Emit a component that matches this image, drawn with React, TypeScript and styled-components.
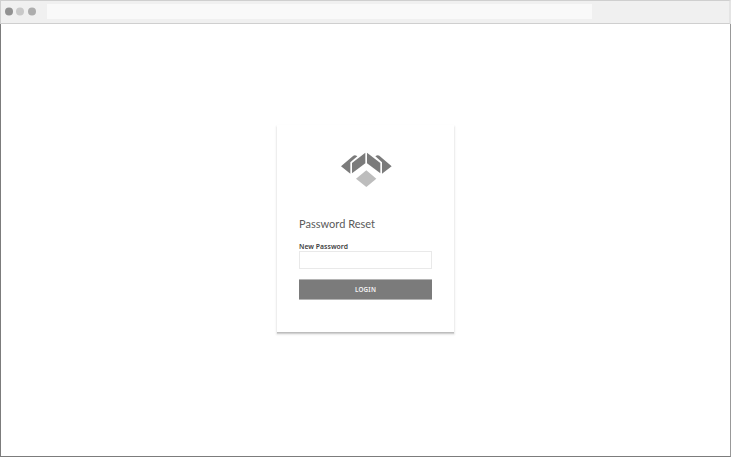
import React from "react";
import styled, { createGlobalStyle } from "styled-components";

const GlobalStyle = createGlobalStyle`
  * { box-sizing: border-box; }
  body { margin: 0; background: #fff; overflow: hidden; }
`;

const BrowserWindow = styled.div`
  width: 731px;
  height: 457px;
  display: flex;
  flex-direction: column;
`;

const Toolbar = styled.header`
  height: 24px;
  flex: none;
  display: flex;
  align-items: flex-start;
  padding: 3px 0 0 4px;
  background: #f0f0f0;
  border: 1px solid #cfcfcf;
  border-right: 2px solid #e4e4e4;
`;

const Dots = styled.svg`
  width: 42px;
  height: 15px;
  flex: none;
`;

const AddressBar = styled.div`
  width: 545px;
  height: 15px;
  background: #f9f9f9;
`;

const Viewport = styled.main`
  flex: 1;
  display: flex;
  justify-content: center;
  align-items: flex-start;
  padding-top: 101px;
  border: 1px solid #7c7c7c;
  border-top: 0;
  border-right-color: #999;
`;

const Card = styled.form`
  width: 177px;
  height: 207px;
  display: flex;
  flex-direction: column;
  padding: 20px 22px 0;
  background: #fff;
  box-shadow: 0 1px 0 #bdbdbd, 0 2px 1px #d2d2d2, 0 2px 2px 1px #eeeeee;
`;

const Logo = styled.svg`
  width: 72px;
  height: 48px;
  flex: none;
  margin-left: 31px;
`;

const Title = styled.h1`
  margin: 24px 0 0;
  font: 400 11px/14px Lato, sans-serif;
  letter-spacing: 0.02px;
  color: #5a5a5a;
  white-space: nowrap;
`;

const Label = styled.label`
  margin-top: 11px;
  font: 600 6.8px/9px "Noto Sans", sans-serif;
  letter-spacing: 0.05px;
  color: #404040;
  white-space: nowrap;
`;

const Input = styled.input`
  width: 133px;
  height: 18px;
  padding: 0 4px;
  border: 1px solid #e9e9e9;
  border-radius: 0;
  background: #fff;
  outline: none;
`;

const Button = styled.button`
  width: 133px;
  height: 21px;
  margin-top: 10px;
  padding: 0;
  border: 1px solid #b4b4b4;
  border-width: 1px 0;
  background: #7b7b7b;
  color: #f4f4f4;
  font: 600 6.3px/19px "Noto Sans", sans-serif;
  letter-spacing: 0.2px;
`;

export default function App() {
  return (
    <>
      <GlobalStyle />
      <BrowserWindow>
        <Toolbar>
          <Dots viewBox="0 0 42 15" aria-hidden="true">
            <circle cx="4" cy="7.4" r="4" fill="#929292" />
            <circle cx="15" cy="7.4" r="4" fill="#c9c9c9" />
            <circle cx="27" cy="7.4" r="4" fill="#adadad" />
          </Dots>
          <AddressBar />
        </Toolbar>
        <Viewport>
          <Card>
            <Logo viewBox="0 0 216 144" aria-hidden="true">
              <g fill="#7b7b7b">
                <path d="M33 64 L70 32 Q75 28 82 34 L61 52 V86 Z" />
                <path d="M66 54 L106 23 V55 L66 85 Z" />
                <path d="M111 23 L151 54 V85 L111 55 Z" />
                <path d="M185 64 L148 32 Q143 28 136 34 L156 52 V86 Z" />
              </g>
              <path d="M109 76 L139 101 L109 126 L78 101 Z" fill="#bdbdbd" />
            </Logo>
            <Title>Password Reset</Title>
            <Label htmlFor="new-password">New Password</Label>
            <Input id="new-password" type="password" />
            <Button type="button">LOGIN</Button>
          </Card>
        </Viewport>
      </BrowserWindow>
    </>
  );
}
